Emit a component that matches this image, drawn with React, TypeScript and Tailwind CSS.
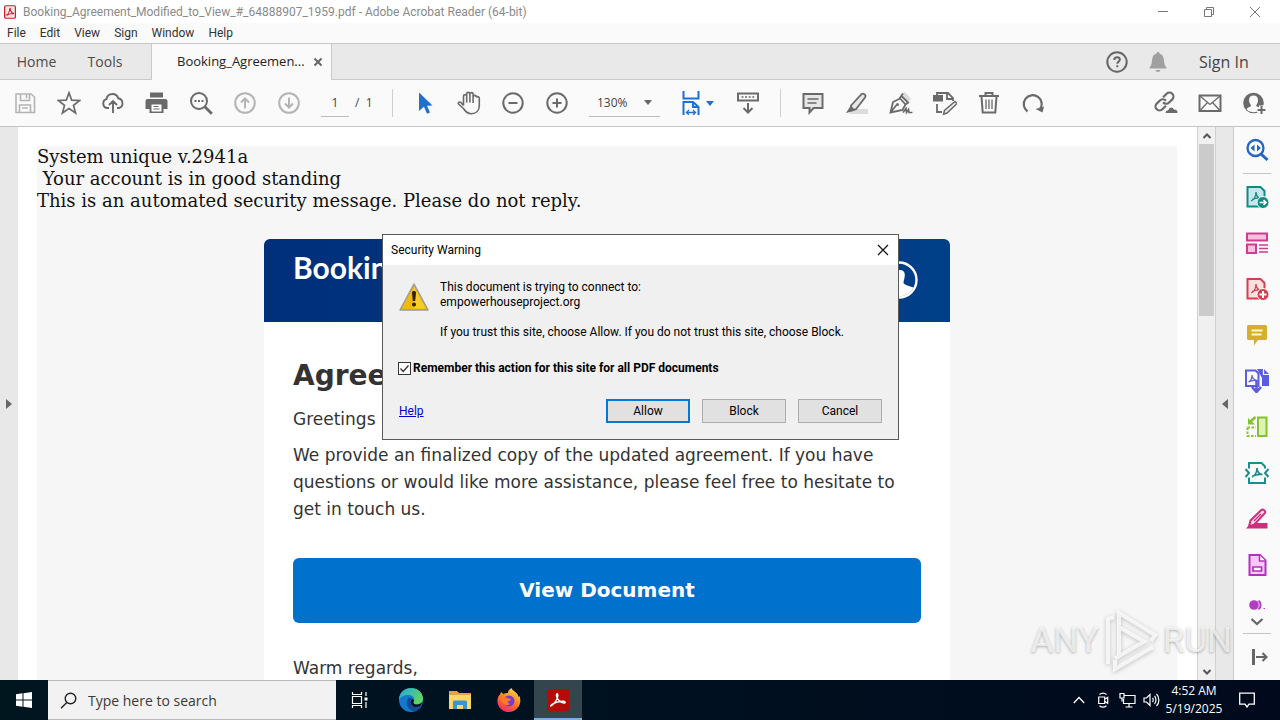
import type { ReactNode } from "react";

function Icon({ children, size = "size-6", className = "" }: { children: ReactNode; size?: string; className?: string }) {
  return (
    <svg viewBox="0 0 24 24" aria-hidden="true" fill="none" stroke="currentColor" strokeWidth="2" className={`${size} shrink-0 ${className}`}>
      {children}
    </svg>
  );
}

function ToolButton({ label, children, muted = false }: { label: string; children: ReactNode; muted?: boolean }) {
  return (
    <button type="button" aria-label={label} className={`flex h-11 w-11 shrink-0 items-center justify-center ${muted ? "text-[#b4b4b4]" : "text-[#6a6a6a]"}`}>
      <Icon>{children}</Icon>
    </button>
  );
}

const acrobatMark = "M4.500 18.500c2.500-1.200 6.500-6 7.300-11 .4-3-1.800-3-1.500-.2.500 3.700 4.500 7.500 8.200 8 1.800.2 1.800-1.800-.2-1.900-4.500-.2-8.500.6-12.300 3-1.500 1-2.500 2.500-1.500 2.100z";

function TitleBar() {
  return (
    <header className="flex h-[23px] shrink-0 items-center bg-white font-['Roboto',sans-serif] text-[12px] text-[#8a8a8a]">
      <svg viewBox="0 0 14 16" aria-hidden="true" className="ml-1 h-4 w-3 shrink-0">
        <rect x="0.700" y="0.700" width="12.600" height="14.600" rx="1.500" fill="#fbe3e3" stroke="#c8202f" strokeWidth="1.400" />
        <path d="M3 11.500c1.500-.6 3.300-4 3.700-7 .1-1 .8-1 .7 0-.4 2 1.600 4.500 3.600 5 .5.2.3.7-.3.6-2-.3-5 .1-7 1.600z" fill="none" stroke="#c8202f" strokeWidth="1.200" />
      </svg>
      <h1 className="ml-[7px] grow truncate">Booking_Agreement_Modified_to_View_#_64888907_1959.pdf - Adobe Acrobat Reader (64-bit)</h1>
      <button type="button" aria-label="Minimize" className="flex w-[46px] justify-center">
        <svg viewBox="0 0 12 12" className="size-3" stroke="#777" fill="none"><path d="M1 5.500h10" /></svg>
      </button>
      <button type="button" aria-label="Restore" className="flex w-[46px] justify-center">
        <svg viewBox="0 0 12 12" className="size-3" stroke="#777" fill="none"><path d="M1.500 3.500h7v7h-7zM3.500 3.500v-2h7v7h-2" /></svg>
      </button>
      <button type="button" aria-label="Close" className="flex w-[46px] justify-center">
        <svg viewBox="0 0 12 12" className="size-3" stroke="#777" fill="none"><path d="M1 1l10 10M11 1L1 11" /></svg>
      </button>
      <span className="w-[2px]" />
    </header>
  );
}

function MenuBar() {
  return (
    <nav className="flex h-5 shrink-0 items-center gap-[14px] bg-[#fafafa] pl-[7px] font-['Roboto',sans-serif] text-[12px] text-[#333]">
      {["File", "Edit", "View", "Sign", "Window", "Help"].map((m) => (
        <button type="button" key={m}>{m}</button>
      ))}
    </nav>
  );
}

function TabBar() {
  return (
    <div className="flex h-[37px] shrink-0 border-y border-[#c9c9c9] bg-[#e9e9e9] text-[14px] text-[#4b4b4b]">
      <button type="button" className="w-[71px] pl-[2px] text-center">Home</button>
      <button type="button" className="w-20 pr-3 text-center">Tools</button>
      <div className="-mb-px flex w-[181px] items-center border-x border-[#c9c9c9] bg-[#fafafa] pl-[25px] text-[13px] text-[#222]">
        <span className="w-[132px] whitespace-nowrap">Booking_Agreemen...</span>
        <button type="button" aria-label="Close tab" className="ml-1">
          <svg viewBox="0 0 10 10" className="size-[10px]" stroke="#666" strokeWidth="2" fill="none"><path d="M1.500 1.500l7 7M8.500 1.500l-7 7" /></svg>
        </button>
      </div>
      <div className="ml-auto flex items-center">
        <button type="button" aria-label="Help" className="flex w-10 justify-center text-[#666]">
          <Icon>
            <circle cx="12" cy="12" r="9.700" />
            <path d="M9.300 10c0-1.800 1.200-2.700 2.800-2.700s2.700 1 2.700 2.400c0 1.900-2.500 2-2.500 4.100M12.300 15.300v2" />
          </Icon>
        </button>
        <button type="button" aria-label="Notifications" className="flex w-[42px] justify-center text-[#a0a0a0]">
          <Icon>
            <path fill="currentColor" stroke="none" d="M12 2c.9 0 1.500.6 1.500 1.500 3 .8 4.200 3.200 4.500 7 .3 4 1 5.500 2.500 7v1h-17v-1c1.500-1.500 2.200-3 2.500-7 .3-3.800 1.500-6.200 4.500-7C10.500 2.600 11.100 2 12 2zM9.500 20h5c-.3 1.300-1.200 2-2.500 2s-2.200-.7-2.500-2z" />
          </Icon>
        </button>
        <button type="button" className="ml-1 w-[97px] pl-4 text-left text-[16px] text-[#444]">Sign In</button>
      </div>
    </div>
  );
}

function Divider() {
  return <span className="h-7 w-px shrink-0 bg-[#cfcfcf]" />;
}

function Toolbar() {
  return (
    <div className="flex h-[47px] shrink-0 items-center overflow-hidden border-b border-[#c4c4c4] bg-[#fafafa] px-[3px] text-[12px] text-[#444]">
      <ToolButton label="Save" muted>
        <path d="M3 3h15l3.500 3v15.500H3zM7.500 3v6.500h9V3M13.500 4v3.500M6.500 21v-7h11v7M9 17h6" strokeWidth="1.600" />
      </ToolButton>
      <ToolButton label="Star">
        <path d="M12 1.800l2.700 7.400 8 .3-6.200 4.900 2.100 7.600-6.600-4.400L5.400 22l2.100-7.600L1.300 9.500l8-.3z" strokeWidth="1.700" />
      </ToolButton>
      <ToolButton label="Upload to cloud">
        <path d="M8 17H6.500A4.500 4.500 0 0 1 5.500 8.200C6 5 8.500 3 11.500 3s5 1.700 5.700 4.300A5 5 0 0 1 18 17h-2M12 22V10.500M8 14l4-4 4 4" strokeWidth="1.900" />
      </ToolButton>
      <ToolButton label="Print">
        <path d="M5 1.500h13v5H5zM3 8h17.500a2 2 0 0 1 2 2v8h-4v4H4.500v-4H.5v-8a2 2 0 0 1 2-2z" fill="currentColor" stroke="none" />
        <path d="M6.500 13.500h10v7h-10z" fill="#fff" stroke="none" />
        <path d="M8.500 15.500h5M8.500 18h6" strokeWidth="1.200" />
      </ToolButton>
      <ToolButton label="Find">
        <circle cx="10" cy="10" r="8" />
        <path d="M15.800 15.800l7 7" strokeWidth="2.800" />
        <path d="M5.500 10h2M9 10h2M12.500 10h2" />
      </ToolButton>
      <ToolButton label="Previous page" muted>
        <circle cx="12" cy="12" r="9.800" />
        <path d="M12 17.500V7.500M8 11.500l4-4 4 4" />
      </ToolButton>
      <ToolButton label="Next page" muted>
        <circle cx="12" cy="12" r="9.800" />
        <path d="M12 6.500v10M8 12.500l4 4 4-4" />
      </ToolButton>
      <div className="flex w-[81px] shrink-0 items-center pl-[10px]">
        <input aria-label="Page number" defaultValue="1" className="h-7 w-7 border-b border-[#bdbdbd] bg-transparent text-center" />
        <span className="ml-[6px] whitespace-pre">/  1</span>
      </div>
      <Divider />
      <span className="w-[10px] shrink-0" />
      <ToolButton label="Select">
        <path d="M6 1.500l13.500 13-5.500.3 3 6.700-3 1.300-3-7-5 4.200z" fill="#1f70cf" stroke="none" />
      </ToolButton>
      <ToolButton label="Pan">
        <path d="M6.500 14.500V5.200a1.600 1.600 0 0 1 3.200 0V11.500M9.700 11.500V3a1.600 1.600 0 0 1 3.200 0v8.500M12.900 11.500V3.200a1.600 1.600 0 0 1 3.200 0v8.800M16.100 12V6a1.600 1.600 0 0 1 3.200 0M19.300 6.500a1.600 1.600 0 0 1 3 .8V14.500c0 5.200-3.300 8.200-7.800 8.200-4 0-6.200-2-8-5.200L1.500 13c-.8-1.700 1.300-2.700 2.500-1.400l2.500 3" strokeWidth="1.600" strokeLinejoin="round" />
      </ToolButton>
      <ToolButton label="Zoom out">
        <circle cx="12" cy="12" r="9.700" />
        <path d="M7.500 12h9" />
      </ToolButton>
      <ToolButton label="Zoom in">
        <circle cx="12" cy="12" r="9.700" />
        <path d="M7.500 12h9M12 7.500v9" />
      </ToolButton>
      <button type="button" className="ml-[10px] flex h-7 w-[71px] shrink-0 items-center justify-between border-b border-[#bdbdbd] pr-2 pl-2">
        130%
        <svg viewBox="0 0 8 5" className="h-[5px] w-2" fill="#666"><path d="M0 0h8L4 5z" /></svg>
      </button>
      <button type="button" aria-label="Page fit" className="ml-[19px] flex h-11 w-[37px] shrink-0 items-center gap-[3px] text-[#1f70cf]">
        <Icon>
          <path d="M4.500 0v7.500h15V0M4.500 24V11h9.500l5.500 5v8M14 11v5h5.500" />
          <path d="M7.500 21.500h9M10 19l-2.500 2.500L10 24M14 19l2.500 2.500L14 24" strokeWidth="1.300" />
        </Icon>
        <svg viewBox="0 0 8 5" className="h-[5px] w-2 shrink-0" fill="currentColor"><path d="M0 0h8L4 5z" /></svg>
      </button>
      <span className="w-[10px] shrink-0" />
      <ToolButton label="Scroll mode">
        <path d="M2 2.500h20v7H2zM12 12v9M7.500 17l4.500 4.500 4.500-4.500" />
        <path d="M5.500 6h13" strokeWidth="1.600" strokeDasharray="2 1.600" />
      </ToolButton>
      <span className="w-[10px] shrink-0" />
      <Divider />
      <span className="w-[10px] shrink-0" />
      <ToolButton label="Comment">
        <path d="M2.500 3h19v14h-9l-4 4.500V17h-6z" fill="#e6e6e6" />
        <path d="M6.500 8h11M6.500 12h9" strokeWidth="1.400" />
      </ToolButton>
      <ToolButton label="Highlight">
        <path d="M8 18h15v5H4z" fill="#dcdcdc" stroke="none" />
        <path d="M6 14.500L16.500 3.200c1.500-1.500 5 .8 3.700 3L11 18.200l-4 1z" fill="#e6e6e6" strokeWidth="1.800" />
        <path d="M5.500 15l5 4-3.500 1.500-6 1.500z" fill="currentColor" stroke="none" />
      </ToolButton>
      <ToolButton label="Sign">
        <path d="M13 3l3-2 6 7-3 3z" fill="#dcdcdc" stroke="none" />
        <path d="M1.500 21.500l2.500-10.500 7-3.500 5.500 6-3 5.500zM1.500 21.500l6-7.500M10.500 7.500l3.500-5M12.500 5l6 6M16.500 13.500l3.500-2.500" strokeWidth="1.800" />
        <circle cx="8.500" cy="13.500" r="1.500" fill="currentColor" stroke="none" />
        <path d="M14 21.500l3-4 .5 4 2-3 .500 3h3.500" strokeWidth="1.700" />
      </ToolButton>
      <ToolButton label="Edit text">
        <path d="M0 4h10v6.500H0z" fill="currentColor" stroke="none" />
        <path d="M4 4V2h11l5 5v3M14 2v6h6M4 13v8h5" strokeWidth="1.800" />
        <path d="M22 10.500l2 2-10 9.500-3.500 1.300 1-3.800z" fill="#eee" strokeWidth="1.500" />
      </ToolButton>
      <ToolButton label="Delete">
        <path d="M2 5h20M8.500 4.500v-2.500h7v2.500M4.500 5.500l1.200 16h12.600l1.200-16" />
        <path d="M9 8.500v9.500M12 8.500v9.500M15 8.500v9.500" strokeWidth="1.300" />
      </ToolButton>
      <ToolButton label="Rotate">
        <path d="M6.500 20.500A9 9 0 1 1 19 18.500" strokeWidth="2.200" />
        <path d="M14.500 18l8.500-2.500-1.500 6z" fill="currentColor" stroke="none" />
      </ToolButton>
      <div className="ml-auto flex pr-px">
        <ToolButton label="Share link">
          <g transform="rotate(-45 10.500 10.500)" strokeWidth="2.200">
            <path d="M8.500 14.500H3.500a4 4 0 0 1 0-8H8a4 4 0 0 1 4 4.500M12.500 6.500h5a4 4 0 0 1 0 8h-4.500a4 4 0 0 1-4-4.500" />
          </g>
          <path d="M11 22.500c0-2 1-3.500 3-3.500.5-3 4.500-4 6-1 2.500 0 4.500 2 4 4.500z" fill="currentColor" stroke="#fafafa" strokeWidth="1" />
        </ToolButton>
        <ToolButton label="Email">
          <path d="M1.500 4.500h21v15.500h-21z" />
          <path d="M2 5l10 8.500L22 5M2 19.500l7.500-8M22 19.500l-7.500-8" strokeWidth="1.300" />
        </ToolButton>
        <ToolButton label="Add people">
          <circle cx="11.500" cy="12" r="10.300" fill="currentColor" stroke="none" />
          <path d="M11.500 4.500c3 0 4.500 2 4.500 4.800 0 2.200-.8 3.700-1.800 5 0 2 4 1.700 4.500 4.200-4 3.700-10.500 3.700-14 0 .5-2.500 4.300-2.200 4.300-4.200-1-1.300-2-2.800-2-5 0-2.800 1.500-4.800 4.500-4.800z" fill="#fafafa" stroke="none" />
          <path d="M15 19h9M19.500 14.500v9" stroke="#fafafa" strokeWidth="5" />
          <path d="M15.500 19h8M19.500 15v8" />
        </ToolButton>
      </div>
    </div>
  );
}

function DocumentPage() {
  return (
    <section className="min-w-0 grow overflow-hidden bg-white pt-[19px] pr-5 pl-[19px]">
      <div className="min-h-full bg-[#f6f6f6]">
        <p className="whitespace-pre font-['DejaVu_Serif',serif] text-[18px] leading-[22px] text-[#111]">
          {"System unique v.2941a\n Your account is in good standing\nThis is an automated security message. Please do not reply."}
        </p>
        <article className="mx-auto mt-[27px] w-[686px] overflow-hidden rounded-t-md bg-white font-['DejaVu_Sans',sans-serif] text-[17px] leading-[27px] text-[#333]">
          <div className="flex h-[83px] justify-between bg-linear-to-r from-[#002f7a] to-[#004089] pr-8 pl-[29px]">
            <span className="pt-[10px] font-['Lato',sans-serif] text-[30px] leading-[36px] font-bold text-white">Booking.com</span>
            <svg viewBox="0 0 38 38" aria-hidden="true" className="mt-[22px] size-[38px]">
              <circle cx="19" cy="19" r="17.500" fill="none" stroke="#fff" strokeWidth="2.400" />
              <path d="M19 9c4.500 0 6 2 5.800 5.500-.2 3.500-1.300 5-1.300 7.500 1 2 6 3 10 4.500-3 5.500-8 9-14.500 9s-11-3.500-14-9c4-1.500 9-2.500 10-4.500 0-2.500-1.600-4-1.800-7.500C13 11 14.500 9 19 9z" fill="#fff" />
            </svg>
          </div>
          <div className="px-[29px] pt-9">
            <h2 className="text-[28px] leading-9 font-bold">Agreement</h2>
            <p className="mt-3">Greetings</p>
            <p className="mt-[9px]">We provide an finalized copy of the updated agreement. If you have questions or would like more assistance, please feel free to hesitate to get in touch us.</p>
            <a href="#view" className="mt-[35px] block rounded-md bg-[#0071cd] py-[19px] text-center text-[20px] font-bold text-white">View Document</a>
            <p className="mt-8">Warm regards,</p>
          </div>
        </article>
      </div>
    </section>
  );
}

function Scrollbar() {
  return (
    <div className="flex w-[19px] shrink-0 flex-col items-center border-x border-[#d0d0d0] bg-[#f0f0f0]">
      <button type="button" aria-label="Scroll up" className="flex h-[17px] items-center">
        <svg viewBox="0 0 8 6" className="h-[6px] w-2" fill="none" stroke="#555" strokeWidth="2"><path d="M0.500 5l3.500-3.500L7.500 5" /></svg>
      </button>
      <div className="h-[172px] w-[15px] bg-[#cbcbcb]" />
      <button type="button" aria-label="Scroll down" className="mt-auto flex h-[17px] items-center">
        <svg viewBox="0 0 8 6" className="h-[6px] w-2" fill="none" stroke="#555" strokeWidth="2"><path d="M0.500 1l3.500 3.500L7.500 1" /></svg>
      </button>
    </div>
  );
}

function SideTool({ label, color, children }: { label: string; color: string; children: ReactNode }) {
  return (
    <button type="button" aria-label={label} className={`flex h-[46px] w-full shrink-0 items-center justify-center ${color}`}>
      <Icon>{children}</Icon>
    </button>
  );
}

const pdfSheet = "M2.500 2h13l4 4v15.500h-17z";
const pdfSwirl = "M6 16c2.500-1 5-4.500 5-9M11 7c0 3.500 2 6 5.500 6.500M7 14.500c3-1.500 6-2 9.500-1.500";

function ToolsPane() {
  return (
    <aside className="flex w-[47px] shrink-0 flex-col items-center overflow-hidden border-l border-[#c9c9c9] bg-[#fafafa]">
      <SideTool label="Search tools" color="text-[#2465c4]">
        <circle cx="10.500" cy="10" r="8" strokeWidth="2.300" />
        <path d="M16 16l6.500 6" strokeWidth="3" />
        <path d="M9.500 6.500v7l-4-3.500zM12 6.500v7l4-3.500z" fill="currentColor" stroke="none" />
      </SideTool>
      <span className="h-px w-7 shrink-0 bg-[#c4c4c4]" />
      <SideTool label="Export PDF" color="text-[#138a7d]">
        <path d={pdfSheet} fill="#c5e8f0" />
        <path d={pdfSwirl} strokeWidth="1.300" />
        <circle cx="18" cy="17.500" r="6" fill="currentColor" stroke="#fafafa" strokeWidth="1" />
        <path d="M14.500 17.500h6M18.500 15l2.500 2.500-2.500 2.500" stroke="#fff" strokeWidth="1.700" />
      </SideTool>
      <SideTool label="Organize pages" color="text-[#cf3d8f]">
        <path d="M2 2.500h20v7H2zM2 13.500h9v8.500H2z" fill="#f7bfe0" />
        <path d="M14 14h9M14 17.500h9M14 21h9" strokeWidth="1.300" />
      </SideTool>
      <SideTool label="Create PDF" color="text-[#d23f4e]">
        <path d={pdfSheet} fill="#fce0dd" />
        <path d={pdfSwirl} strokeWidth="1.300" />
        <circle cx="18" cy="17.500" r="6" fill="currentColor" stroke="#fafafa" strokeWidth="1" />
        <path d="M14.500 17.500h7M18 14v7" stroke="#fff" strokeWidth="2" />
      </SideTool>
      <SideTool label="Comment" color="text-[#d4b02d]">
        <path d="M3.500 2h17A1.500 1.500 0 0 1 22 3.500v12a1.500 1.500 0 0 1-1.500 1.500H13l-4 5.500V17H3.500A1.500 1.500 0 0 1 2 15.500v-12A1.500 1.500 0 0 1 3.500 2z" fill="currentColor" stroke="none" />
        <path d="M6.500 7.500h11M6.500 11.500h10" stroke="#fff8cc" />
      </SideTool>
      <SideTool label="Combine files" color="text-[#5c5ce0]">
        <path d="M12 0h7l5 5v12h-7V9z" fill="currentColor" stroke="none" />
        <path d="M18.500 0v5.500h5.500" stroke="#fafafa" strokeWidth="1.200" />
        <path d="M1 1.500h9.500l3 3V17H1z" fill="#fafafa" />
        <path d="M3.500 13c2-1 3.500-4 3.500-7 0 3 2 5 5 5.500-3-.5-6 0-8.500 1.500" strokeWidth="1.200" />
        <path d="M11.500 11v11M7 18l4.500 5 4.500-5" strokeWidth="2.600" />
      </SideTool>
      <SideTool label="Compress pages" color="text-[#86c22f]">
        <path d="M13 2.500h8.500V21H13z" fill="#dff2b5" />
        <path d="M2.500 12.500H11M2.500 12.500V21H11" strokeDasharray="2.500 1.500" />
        <path d="M10.500 2L5 7" strokeWidth="2.500" />
        <path d="M3 3v6.500h7z" fill="currentColor" stroke="none" />
      </SideTool>
      <SideTool label="Compress PDF" color="text-[#1d8c8c]">
        <path d="M4 7.500V2h12.500L20 5.500v2M4 16.500V22h16v-5.500" />
        <path d="M7 16c2.500-1 5-4.500 5-9M12 7c0 3.500 2 6 5.500 6.500M7.500 15c3-1.500 6-2 10-1.500" strokeWidth="1.700" />
        <path d="M.5 8l3.500 4-3.500 4M23.500 8L20 12l3.500 4" />
      </SideTool>
      <SideTool label="Redact" color="text-[#cc2f7c]">
        <path d="M1 21.500l5-5.500h16.500v5.500z" fill="currentColor" stroke="none" />
        <path d="M5.500 13.500L16.500 2.800c1.500-1 4.500 1.200 3.500 3L9.500 17.500 4 19.500z" fill="#fbd5e6" />
        <path d="M9 14l7-7" strokeWidth="1.300" />
      </SideTool>
      <SideTool label="Prepare form" color="text-[#b130bd]">
        <path d="M4.500 2h10.500l5.500 5.500V22h-16z" fill="#f8c8fb" />
        <path d="M14.500 2v6h6" fill="#fff" strokeWidth="1.600" />
        <path d="M8 14h8.500v4H8z" fill="#fff" strokeWidth="1.700" />
      </SideTool>
      <button type="button" aria-label="Request signatures" className="flex h-[22px] w-full shrink-0 items-end justify-center text-[#b43cc4]">
        <svg viewBox="0 0 18 10" className="h-[10px] w-[18px]" fill="none" stroke="currentColor">
          <circle cx="6" cy="5" r="4.800" fill="currentColor" stroke="none" />
          <path d="M10.500.8c2.800 1.500 2.800 6.700 0 8.400" strokeWidth="2" />
          <path d="M15.500 8.500h1.500" />
        </svg>
      </button>
      <button type="button" aria-label="More tools" className="flex h-[23px] shrink-0 items-center">
        <svg viewBox="0 0 14 8" className="h-2 w-[14px]" fill="none" stroke="#666" strokeWidth="2.200"><path d="M1.500 1l5.500 5 5.500-5" /></svg>
      </button>
      <span className="h-px w-7 shrink-0 bg-[#c4c4c4]" />
      <SideTool label="Collapse pane" color="text-[#666]">
        <path d="M8.500 4v16" strokeWidth="3" />
        <path d="M11 12h10M17.500 8l4 4-4 4" strokeWidth="2.100" />
      </SideTool>
    </aside>
  );
}

function SecurityDialog() {
  const action = "h-6 w-[84px] bg-[#e1e1e1] text-center";
  return (
    <div role="dialog" aria-labelledby="warning-title" className="w-[517px] border border-[#5a5a5a] bg-[#f0f0f0] font-['Roboto',sans-serif] text-[12px] leading-[15px] text-black">
      <div className="flex h-[30px] items-center justify-between bg-white pr-[9px] pl-2">
        <h2 id="warning-title">Security Warning</h2>
        <button type="button" aria-label="Close dialog">
          <svg viewBox="0 0 12 12" className="size-3" stroke="#111" fill="none" strokeWidth="1.200"><path d="M1 1l10 10M11 1L1 11" /></svg>
        </button>
      </div>
      <div className="px-4 pt-[15px] pb-4">
        <div className="flex gap-[11px]">
          <svg viewBox="0 0 30 28" aria-hidden="true" className="mt-[3px] h-7 w-[30px] shrink-0">
            <path d="M15 1L29 27H1z" fill="#f2b90a" stroke="#9b9b9b" strokeWidth="1.500" strokeLinejoin="round" />
            <path d="M15 3.500L26.500 25.500H15z" fill="#ffd83a" opacity=".6" />
            <path d="M13 9.500c0-2 4-2 4 0l-.8 8.500h-2.400z" fill="#2b2410" />
            <circle cx="15" cy="21.500" r="2" fill="#2b2410" />
          </svg>
          <div>
            <p>This document is trying to connect to:</p>
            <p>empowerhouseproject.org</p>
            <p className="mt-[15px]">If you trust this site, choose Allow. If you do not trust this site, choose Block.</p>
          </div>
        </div>
        <label className="mt-[21px] -ml-px flex items-center gap-[2px] font-bold">
          <span className="grid size-[13px] shrink-0">
            <input type="checkbox" defaultChecked className="peer col-start-1 row-start-1 size-[13px] appearance-none border border-[#333] bg-white" />
            <svg viewBox="0 0 13 13" aria-hidden="true" className="pointer-events-none invisible col-start-1 row-start-1 size-[13px] peer-checked:visible" fill="none" stroke="#333" strokeWidth="1.300"><path d="M2.500 6.500l2.700 3L10.500 3.500" /></svg>
          </span>
          Remember this action for this site for all PDF documents
        </label>
        <div className="mt-[23px] flex items-center gap-3">
          <a href="#help" className="mr-auto text-[#0000cc] underline">Help</a>
          <button type="button" className={`${action} border-2 border-[#0078d7]`}>Allow</button>
          <button type="button" className={`${action} border border-[#adadad]`}>Block</button>
          <button type="button" className={`${action} border border-[#adadad]`}>Cancel</button>
        </div>
      </div>
    </div>
  );
}

function Watermark() {
  return (
    <div className="pointer-events-none absolute right-12 bottom-2 flex items-center gap-1 font-['Roboto',sans-serif] text-[35px] leading-[62px] text-white/70 [text-shadow:0_1px_3px_rgba(0,0,0,0.3)]">
      <span>ANY</span>
      <svg viewBox="0 0 56 62" aria-hidden="true" className="h-[62px] w-14 drop-shadow-[0_1px_2px_rgba(0,0,0,0.3)]" fill="none" stroke="#fff" strokeOpacity="0.750" strokeWidth="4">
        <path d="M16 46V17l25 14.500-29 17M16 15V3l36 22-4 6M5 54V9l6-2M12 50v9l38-22" />
      </svg>
      <span>RUN</span>
    </div>
  );
}

function Taskbar() {
  return (
    <footer className="flex h-10 shrink-0 bg-linear-to-r from-[#00161f] via-[#00101f] to-[#000a1c] text-white">
      <button type="button" aria-label="Start" className="flex w-12 items-center justify-center">
        <svg viewBox="0 0 16 16" className="size-4" fill="#fff"><path d="M0 2.200L6.500 1.300v6.200H0zM7.500 1.200L16 0v7.500H7.500zM0 8.500h6.500v6.200L0 13.800zM7.500 8.500H16V16l-8.500-1.200z" /></svg>
      </button>
      <label className="flex w-72 items-center border-y border-[#bbb] bg-[#f2f2f2] pl-3 text-[#333]">
        <svg viewBox="0 0 17 17" aria-hidden="true" className="size-[17px]" fill="none" stroke="#222" strokeWidth="1.400"><circle cx="10.500" cy="6.500" r="5.300" /><path d="M6.800 10.500L1 16.300" /></svg>
        <input aria-label="Search" placeholder="Type here to search" className="ml-[11px] min-w-0 grow bg-transparent text-[14px] placeholder:text-[#3a3a3a]" />
      </label>
      <button type="button" aria-label="Task view" className="flex w-12 items-center justify-center">
        <svg viewBox="0 0 18 16" className="h-4 w-[18px]" fill="none" stroke="#fff" strokeWidth="1.200"><path d="M1.500 0v2.500h9V0M1.500 4.500h9v7h-9zM1.500 16v-2.500h9V16M15 0v4M15 10v6" /><path d="M13.500 5.500h3v3h-3z" fill="#fff" stroke="none" /></svg>
      </button>
      <button type="button" aria-label="Microsoft Edge" className="flex w-[54px] items-center justify-center">
        <svg viewBox="0 0 24 24" className="size-6">
          <defs>
            <linearGradient id="edgeTop" x1="0" y1="0" x2="1" y2=".6"><stop offset="0" stopColor="#23a7e8" /><stop offset="1" stopColor="#5fd75a" /></linearGradient>
          </defs>
          <circle cx="12" cy="12" r="12" fill="#1478cc" />
          <path d="M0 12C0 5 5 0 12 0s12 5 12 10.500c0 4-3 6-6 6s-4.500-1.200-3-3.500c1-3-1-6-5.500-6S1 9 0 12z" fill="url(#edgeTop)" />
          <path d="M9 10.500c-3 5 0 12 6 12.500 3-.6 5.500-2 7.300-4.500-4 2-9.300.500-10.300-4.500-.3-1.500 0-3 1-4-1-.5-3-.5-4 .5z" fill="#124a96" />
          <path d="M15 13c-1.500 2.300 0 3.500 3 3.500 2 0 4-1 5-2.500-.3 1.800-.9 3-1.700 4.200-4 1.800-9.300.4-9.300-4.200 0-3 2-4.500 3-1z" fill="#00131f" />
        </svg>
      </button>
      <button type="button" aria-label="File Explorer" className="flex w-[43px] items-center justify-center">
        <svg viewBox="0 0 22 20" className="h-5 w-[22px]">
          <path d="M0 1h8l2 2h12v16H0z" fill="#e8a33b" />
          <path d="M0 5h22v14H0z" fill="#ffd768" />
          <path d="M4 19v-7a1.500 1.500 0 0 1 1.500-1.500h11A1.500 1.500 0 0 1 18 12v7h-4v-4H8v4z" fill="#3b93d0" />
        </svg>
      </button>
      <button type="button" aria-label="Firefox" className="flex w-[55px] items-center justify-center">
        <svg viewBox="0 0 24 24" className="size-6">
          <defs>
            <linearGradient id="fox" x1=".8" y1="0" x2=".3" y2="1"><stop offset="0" stopColor="#ffe14a" /><stop offset=".45" stopColor="#ff8a1f" /><stop offset="1" stopColor="#f5275f" /></linearGradient>
          </defs>
          <path d="M4 4l2.500 2C8 5 9.500 4.700 11 5c0-2 1.500-4 3.500-5 .5 3 6.500 4 7 9l1-1c3 8-2.500 16-10.500 16C5 24 0 18.500.5 12 .7 9 2 7.500 3 6.500z" fill="url(#fox)" />
          <circle cx="12" cy="13" r="5.500" fill="#7a3bd0" />
          <path d="M4 10c3-2 6-1 7 .5 1.500 0 3 0 3 1-.5 1.500-3 1.500-3.500 3 .5 1 1.500 1.300 2.500 1-1 2-4.500 2.500-6.500 0C4.500 14 4 12 4 10z" fill="#ff7a26" />
        </svg>
      </button>
      <button type="button" aria-label="Adobe Acrobat" className="-ml-[2px] flex w-12 items-center justify-center border-b-2 border-[#76b0e4] bg-[#35454e] pt-[2px]">
        <svg viewBox="0 0 24 24" className="size-[22px]">
          <rect width="24" height="24" rx="3" fill="#b40b05" />
          <path d={acrobatMark} fill="none" stroke="#fff" strokeWidth="1.500" />
        </svg>
      </button>
      <div className="ml-auto flex items-center">
        <button type="button" aria-label="Show hidden icons" className="flex w-6 justify-center">
          <svg viewBox="0 0 12 8" className="h-2 w-3" fill="none" stroke="#fff" strokeWidth="1.300"><path d="M.8 7L6 1.500 11.200 7" /></svg>
        </button>
        <button type="button" aria-label="Camera" className="flex w-6 justify-center">
          <svg viewBox="0 0 14 16" className="h-4 w-[14px]" fill="none" stroke="#fff" strokeWidth="1.200"><path d="M2.700 5h6v6.500h-6zM8.700 7.300l3-2v6l-3-2M3.500 2.500c2-1.700 5-1.700 7 0M3.500 13.700c2 1.700 5 1.700 7 0" /></svg>
        </button>
        <button type="button" aria-label="Network" className="flex w-6 justify-center">
          <svg viewBox="0 0 17 16" className="h-4 w-[17px]" fill="none" stroke="#fff" strokeWidth="1.200"><path d="M5.500 3.500h10.500v8H4.500V7M10 11.500V15M6.500 15h7M1 1.500h4V6H1zM3 6v3.500" /></svg>
        </button>
        <button type="button" aria-label="Volume" className="flex w-6 justify-center">
          <svg viewBox="0 0 17 14" className="h-[14px] w-[17px]" fill="none" stroke="#fff" strokeWidth="1.200"><path d="M1 5h2.500L7 1.500v11L3.500 9H1zM9.500 5c1 1 1 3 0 4M11.500 3c2 2 2 6 0 8M13.500 1c3.200 3.200 3.200 8.800 0 12" /></svg>
        </button>
        <div className="w-[62px] text-center text-[12px] leading-[18px] whitespace-nowrap">
          <p>4:52 AM</p>
          <p>5/19/2025</p>
        </div>
        <button type="button" aria-label="Notifications center" className="flex w-11 justify-center">
          <svg viewBox="0 0 16 16" className="size-4" fill="none" stroke="#fff" strokeWidth="1.300"><path d="M.7 1.200h14.600v11H10L8 15l-2-2.800H.7z" /></svg>
        </button>
        <span className="h-10 w-[11px]" />
      </div>
    </footer>
  );
}

export default function App() {
  return (
    <div className="relative flex h-screen flex-col overflow-hidden bg-white font-['Open_Sans',sans-serif]">
      <TitleBar />
      <MenuBar />
      <TabBar />
      <Toolbar />
      <main className="relative flex min-h-0 grow">
        <button type="button" aria-label="Show navigation pane" className="flex w-[18px] shrink-0 items-center justify-center bg-[#e8e8e8]">
          <svg viewBox="0 0 6 10" className="h-[10px] w-[6px]" fill="#666"><path d="M0 0l6 5-6 5z" /></svg>
        </button>
        <DocumentPage />
        <Scrollbar />
        <button type="button" aria-label="Hide tools pane" className="flex w-[17px] shrink-0 items-center justify-center bg-[#e8e8e8]">
          <svg viewBox="0 0 6 10" className="h-[10px] w-[6px]" fill="#666"><path d="M6 0L0 5l6 5z" /></svg>
        </button>
        <ToolsPane />
        <Watermark />
      </main>
      <Taskbar />
      <div className="absolute inset-x-0 top-[234px] flex justify-center pl-px">
        <SecurityDialog />
      </div>
    </div>
  );
}
